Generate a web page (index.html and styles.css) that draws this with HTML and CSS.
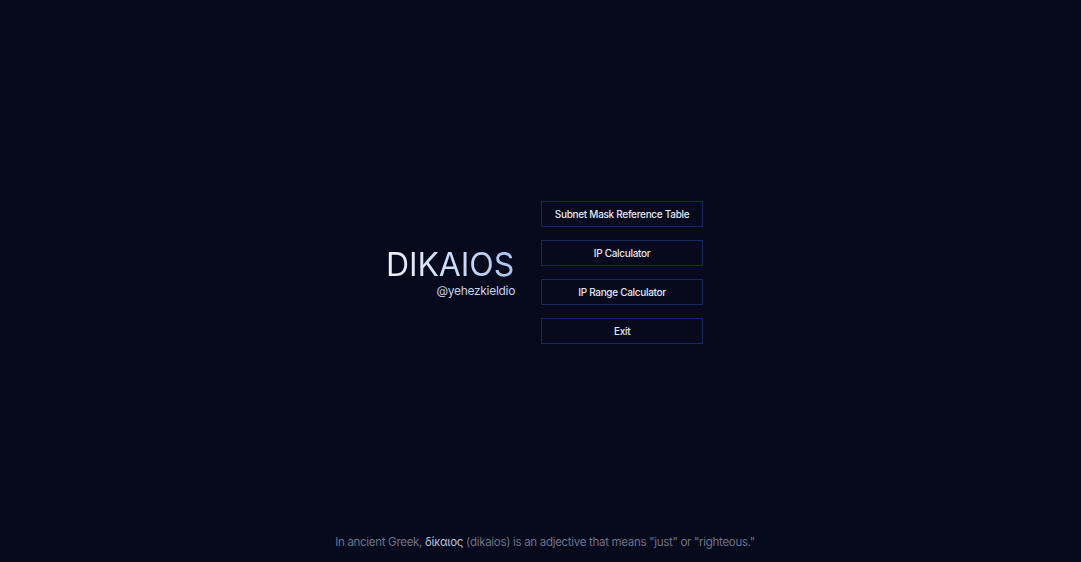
FILE: index.html
```html
<!DOCTYPE html>
<html lang="en">
<head>
<meta charset="utf-8">
<title>Dikaios</title>
<link rel="stylesheet" href="styles.css">
</head>
<body>
<main class="main">
  <div class="brand">
    <h1 class="title">DIKAIOS</h1>
    <div class="handle">@yehezkieldio</div>
  </div>
  <nav class="menu">
    <button class="btn">Subnet Mask Reference Table</button>
    <button class="btn">IP Calculator</button>
    <button class="btn">IP Range Calculator</button>
    <button class="btn">Exit</button>
  </nav>
</main>
<footer class="footer">In ancient Greek, <span class="greek">δίκαιος</span> (dikaios) is an adjective that means "just" or "righteous."</footer>
</body>
</html>
```
FILE: styles.css
```css
html, body {
  margin: 0;
  height: 100%;
}
body {
  background: #060a1c;
  font-family: Inter, "Noto Sans", sans-serif;
  display: flex;
  flex-direction: column;
  color: #e3e7f2;
}
.main {
  flex: 1;
  display: flex;
  align-items: center;
  justify-content: center;
  gap: 27px;
  padding: 10px 0 0 8px;
}
.brand {
  display: flex;
  flex-direction: column;
  align-items: flex-end;
}
.title {
  margin: 0;
  font-size: 32px;
  font-weight: 400;
  line-height: 36px;
  letter-spacing: -0.1px;
  background: linear-gradient(90deg, #eef1f8 0%, #c9d8f5 60%, #a9c4f0 100%);
  -webkit-background-clip: text;
  background-clip: text;
  color: transparent;
}
.handle {
  font-size: 12px;
  color: #c8d0e6;
  margin-top: 0;
  margin-right: -1px;
  letter-spacing: -0.3px;
}
.menu {
  display: flex;
  flex-direction: column;
  gap: 13px;
}
.btn {
  width: 162px;
  height: 26px;
  background: #060a1c;
  border: 1px solid #1c2560;
  color: #e3e7f2;
  font-family: Inter, "Noto Sans", sans-serif;
  font-size: 10px;
  font-weight: 500;
  letter-spacing: -0.3px;
  padding: 0;
  cursor: pointer;
}
.footer {
  text-align: center;
  font-size: 11.5px;
  color: #6c7389;
  padding: 0 0 12px 9px;
  letter-spacing: -0.3px;
  line-height: 16px;
}
.greek {
  color: #b9c3dc;
}
```
